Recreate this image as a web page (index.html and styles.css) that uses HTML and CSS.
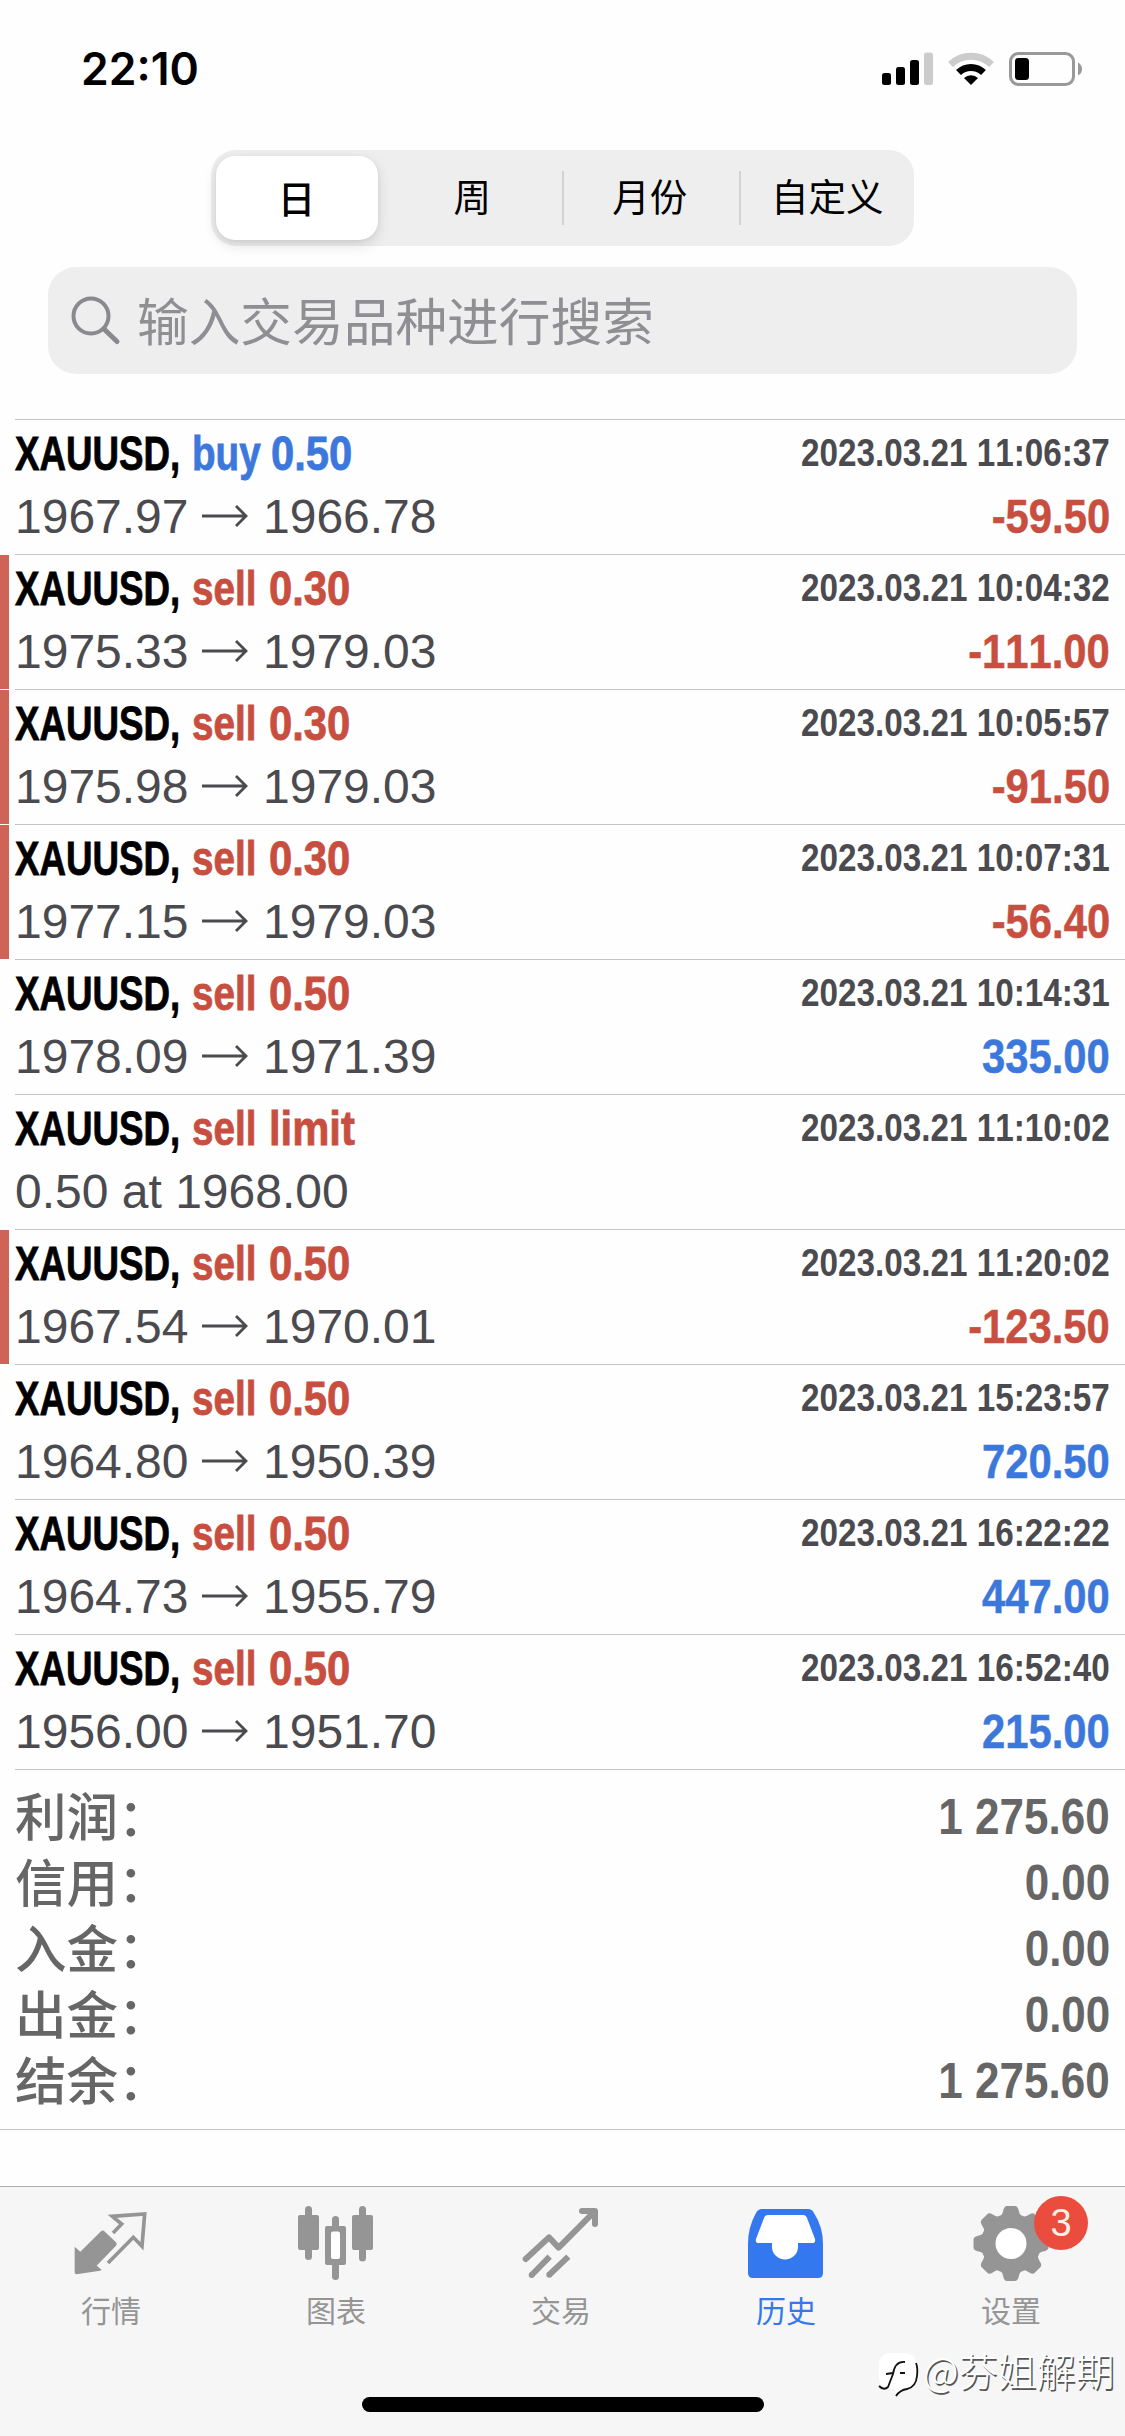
FILE: index.html
```html
<!DOCTYPE html>
<html lang="zh-CN">
<head>
<meta charset="utf-8">
<title>历史</title>
<link rel="stylesheet" href="styles.css">
</head>
<body>
<svg class="defs" width="0" height="0">
  <symbol id="arrow" viewBox="0 0 46 24"><path d="M0 12H44M34 2l10 10-10 10" fill="none" stroke="currentColor" stroke-width="2.8"/></symbol>
</svg>
<header class="status">
  <span class="clock">22:10</span>
  <svg class="status-icons" width="204" height="40" viewBox="880 49 204 40">
    <rect x="882" y="73" width="9" height="12" rx="2.5"/>
    <rect x="896" y="67" width="9" height="18" rx="2.5"/>
    <rect x="910" y="60" width="9" height="25" rx="2.5"/>
    <rect x="924" y="52.500" width="9" height="32.500" rx="2.500" fill="#ccc"/>
    <path d="M950.500 64.500a29.500 29.500 0 0 1 41 0" fill="none" stroke="#ccc" stroke-width="7"/>
    <path d="M958.500 72.500a18 18 0 0 1 25 0" fill="none" stroke="#000" stroke-width="7"/>
    <path d="M971 85l-7-7a10.500 10.500 0 0 1 14 0z"/>
    <rect x="1010.500" y="53.500" width="63" height="31" rx="8" fill="none" stroke="#999" stroke-width="3"/>
    <rect x="1015" y="58" width="14" height="22" rx="3.500"/>
    <path d="M1078 62.500q4 2 4 6.500t-4 6.500z" fill="#999"/>
  </svg>
</header>

<div class="segments">
  <span class="segment active">日</span>
  <span class="segment">周</span>
  <span class="segment divided">月份</span>
  <span class="segment divided">自定义</span>
</div>

<div class="search">
  <svg width="50" height="50" viewBox="0 0 50 50" fill="none" stroke="#8a8a8e" stroke-linecap="round"><circle cx="20" cy="20" r="17.500" stroke-width="4"/><path d="M33 33l13 12.500" stroke-width="5"/></svg>
  <span>输入交易品种进行搜索</span>
</div>

<main class="deals">
  <div class="deal"><div class="body">
    <div class="line"><b class="sym">XAUUSD,</b><b class="side buy">buy</b><b class="vol buy">0.50</b><b class="time">2023.03.21 11:06:37</b></div>
    <div class="line"><span class="open">1967.97</span><svg class="arrow"><use href="#arrow"/></svg><span>1966.78</span><b class="profit loss">-59.50</b></div>
  </div></div>
  <div class="deal stopped"><div class="body">
    <div class="line"><b class="sym">XAUUSD,</b><b class="side sell">sell</b><b class="vol sell">0.30</b><b class="time">2023.03.21 10:04:32</b></div>
    <div class="line"><span class="open">1975.33</span><svg class="arrow"><use href="#arrow"/></svg><span>1979.03</span><b class="profit loss">-111.00</b></div>
  </div></div>
  <div class="deal stopped"><div class="body">
    <div class="line"><b class="sym">XAUUSD,</b><b class="side sell">sell</b><b class="vol sell">0.30</b><b class="time">2023.03.21 10:05:57</b></div>
    <div class="line"><span class="open">1975.98</span><svg class="arrow"><use href="#arrow"/></svg><span>1979.03</span><b class="profit loss">-91.50</b></div>
  </div></div>
  <div class="deal stopped"><div class="body">
    <div class="line"><b class="sym">XAUUSD,</b><b class="side sell">sell</b><b class="vol sell">0.30</b><b class="time">2023.03.21 10:07:31</b></div>
    <div class="line"><span class="open">1977.15</span><svg class="arrow"><use href="#arrow"/></svg><span>1979.03</span><b class="profit loss">-56.40</b></div>
  </div></div>
  <div class="deal"><div class="body">
    <div class="line"><b class="sym">XAUUSD,</b><b class="side sell">sell</b><b class="vol sell">0.50</b><b class="time">2023.03.21 10:14:31</b></div>
    <div class="line"><span class="open">1978.09</span><svg class="arrow"><use href="#arrow"/></svg><span>1971.39</span><b class="profit gain">335.00</b></div>
  </div></div>
  <div class="deal"><div class="body">
    <div class="line"><b class="sym">XAUUSD,</b><b class="side sell">sell</b><b class="vol sell">limit</b><b class="time">2023.03.21 11:10:02</b></div>
    <div class="line"><span>0.50 at 1968.00</span></div>
  </div></div>
  <div class="deal stopped"><div class="body">
    <div class="line"><b class="sym">XAUUSD,</b><b class="side sell">sell</b><b class="vol sell">0.50</b><b class="time">2023.03.21 11:20:02</b></div>
    <div class="line"><span class="open">1967.54</span><svg class="arrow"><use href="#arrow"/></svg><span>1970.01</span><b class="profit loss">-123.50</b></div>
  </div></div>
  <div class="deal"><div class="body">
    <div class="line"><b class="sym">XAUUSD,</b><b class="side sell">sell</b><b class="vol sell">0.50</b><b class="time">2023.03.21 15:23:57</b></div>
    <div class="line"><span class="open">1964.80</span><svg class="arrow"><use href="#arrow"/></svg><span>1950.39</span><b class="profit gain">720.50</b></div>
  </div></div>
  <div class="deal"><div class="body">
    <div class="line"><b class="sym">XAUUSD,</b><b class="side sell">sell</b><b class="vol sell">0.50</b><b class="time">2023.03.21 16:22:22</b></div>
    <div class="line"><span class="open">1964.73</span><svg class="arrow"><use href="#arrow"/></svg><span>1955.79</span><b class="profit gain">447.00</b></div>
  </div></div>
  <div class="deal"><div class="body">
    <div class="line"><b class="sym">XAUUSD,</b><b class="side sell">sell</b><b class="vol sell">0.50</b><b class="time">2023.03.21 16:52:40</b></div>
    <div class="line"><span class="open">1956.00</span><svg class="arrow"><use href="#arrow"/></svg><span>1951.70</span><b class="profit gain">215.00</b></div>
  </div></div>
</main>

<section class="summary">
  <div class="total"><span>利润：</span><b>1 275.60</b></div>
  <div class="total"><span>信用：</span><b>0.00</b></div>
  <div class="total"><span>入金：</span><b>0.00</b></div>
  <div class="total"><span>出金：</span><b>0.00</b></div>
  <div class="total"><span>结余：</span><b>1 275.60</b></div>
</section>

<nav class="tabs">
  <a class="tab">
    <svg viewBox="52 2190 120 100"><g transform="translate(60 2190) scale(.3333)"><path d="M47 170l17 15 62-61q5-5 10 0l35 33q5 5 0 10l-58 60 12 10q5 4-2 5l-70 11q-6 0-6-6z"/><path d="M162 129l26-27-28-23 97-7-8 97-26-27-76 77" fill="none" stroke="currentColor" stroke-width="11"/></g></svg>
    <span>行情</span>
  </a>
  <a class="tab">
    <svg viewBox="277 2190 120 100"><rect x="299" y="2215" width="21" height="35" rx="2"/><rect x="306" y="2206" width="7" height="54" rx="3.500"/><rect x="353" y="2215" width="21" height="35" rx="2"/><rect x="360" y="2206" width="7" height="55.500" rx="3.500"/><rect x="333" y="2216" width="7" height="64" rx="3.500"/><rect x="326" y="2226" width="21" height="39" rx="2"/><rect x="332" y="2231.500" width="9" height="27.500" rx="2" fill="#fff"/></svg>
    <span>图表</span>
  </a>
  <a class="tab">
    <svg viewBox="502 2190 120 100"><g transform="translate(500 2190) scale(.3333)" fill="none" stroke="currentColor" stroke-width="18" stroke-linejoin="round"><path d="M80 207l70-65 29 31L287 64M249 63h39v39" stroke-linecap="round"/><path d="M98 255l54-55M150 255l58-55"/></g><g transform="translate(500 2190) scale(.3333)"><circle cx="98" cy="255" r="9"/><circle cx="151" cy="254" r="9"/></g></svg>
    <span>交易</span>
  </a>
  <a class="tab current">
    <svg viewBox="727 2190 120 100"><path d="M763 2209h46q4 0 6 4 9 14 9 31v29q0 5-5 5h-65q-5 0-5-5v-29q0-17 8-31 2-4 6-4z"/><path d="M769 2215h35q3 0 4 3l8 21q1 4-3 4h-14v4a13 12.500 0 0 1-26 0v-4h-13q-4 0-3-4l8-21q1-3 4-3z" fill="#fff"/></svg>
    <span>历史</span>
  </a>
  <a class="tab">
    <svg viewBox="952 2190 120 100"><circle cx="1012" cy="2243.500" r="30"/>
      <g transform="translate(1012 2243.500)"><path id="tooth" d="M-14-26q5-1 6-6 1-5.500 4-5.500h8q3 0 4 5.500 1 5 6 6z"/><use href="#tooth" transform="rotate(45)"/><use href="#tooth" transform="rotate(90)"/><use href="#tooth" transform="rotate(135)"/><use href="#tooth" transform="rotate(180)"/><use href="#tooth" transform="rotate(225)"/><use href="#tooth" transform="rotate(270)"/><use href="#tooth" transform="rotate(315)"/></g>
      <circle cx="1012" cy="2243.500" r="15.500" fill="#fff"/></svg>
    <span>设置</span>
    <i class="badge">3</i>
  </a>
</nav>
<div class="home"><div class="home-bar"></div></div>
<div class="watermark">
  <svg width="44" height="50" viewBox="0 0 44 50"><path d="M14 3h13q12 0 12 12v11q0 11-10 13-7 1-10 7l-1-7h-3Q2 39 2 27V15Q2 3 14 3z" fill="#fff"/><path d="M39 13q2 5 1 13-1 11-10 13-7 1-11 7M2 36q5 5 9 1l5-13q2-13 12-12M9 24l7-1M23 23h5" fill="none" stroke="#111" stroke-width="1.800"/></svg>
  <span>@芬姐解期</span>
</div>
</body>
</html>
```
FILE: styles.css
```css
* { box-sizing: border-box; }
body {
  position: relative;
  display: flex;
  flex-direction: column;
  width: 1125px;
  height: 2436px;
  margin: 0;
  overflow: hidden;
  background: #fefefe;
  color: #000;
  font-family: "Liberation Sans", "Noto Sans CJK SC", sans-serif;
  font-kerning: none;
}
.defs { position: absolute; }

.status {
  display: flex;
  align-items: center;
  justify-content: space-between;
  height: 150px;
  padding: 0 41px 12px 81px;
}
.clock { font: 600 44.5px/60px Inter, sans-serif; }

.segments {
  display: grid;
  grid-template-columns: repeat(4, 177.5px);
  justify-content: center;
  align-items: center;
  width: 703px;
  height: 96px;
  margin: 0 auto;
  border-radius: 25px;
  background: #eee;
}
.segment {
  margin-left: -1px;
  margin-right: 1px;
  padding-right: 3px;
  font: 400 37.5px/54px "Liberation Sans", "Noto Sans CJK SC", sans-serif;
  text-align: center;
  border-left: 2px solid transparent;
}
.segment.divided { border-left-color: #d2d2d3; }
.segment.active {
  width: 162px;
  margin-left: 8px;
  padding-right: 2px;
  font-family: "Noto Sans CJK SC", sans-serif;
  font-weight: 500;
  line-height: 82px;
  padding-bottom: 2px;
  border-radius: 19px;
  background: #fff;
  box-shadow: 0 5px 14px rgba(0, 0, 0, .12), 0 1px 4px rgba(0, 0, 0, .06);
}

.search {
  display: flex;
  align-items: center;
  gap: 16px;
  width: 1029px;
  height: 107px;
  margin: 21px 48px 45px;
  padding-left: 23px;
  border-radius: 28px;
  background: #eeeeef;
  color: #8e8e93;
  font: 400 51.700px/60px "Noto Sans CJK SC", sans-serif;
}
.search span { padding-bottom: 4px; }

.deal { height: 135px; padding-left: 15px; }
.stopped {
  background: linear-gradient(#cf6356, #cf6356) 0 1px / 9px 134px no-repeat;
}
.body {
  height: 135px;
  padding: 2px 15px 0 0;
  border-top: 1px solid #c4c4c6;
}
.line {
  display: flex;
  height: 63px;
  color: #4a4a4f;
  font-size: 48px;
  line-height: 63px;
  white-space: nowrap;
}
.sym, .side, .vol { transform-origin: 0 50%; -webkit-text-stroke: .8px currentColor; }
.sym { width: 177px; color: #000; transform: scaleX(.765); }
.side { width: 77px; transform: scaleX(.805); }
.side.buy { width: 79px; }
.vol { transform: scaleX(.87); }
.buy, .gain { color: #3c78dc; }
.sell, .loss { color: #c84e3f; }
.time {
  margin-left: auto;
  font-size: 38px;
  line-height: 62px;
  transform: scaleX(.875);
  transform-origin: 100% 50%;
}
.open { width: 187px; }
.arrow { width: 46px; height: 24px; margin: 19px 15px 0 0; }
.profit {
  margin-left: auto;
  transform: scaleX(.87);
  transform-origin: 100% 50%;
  -webkit-text-stroke: .5px currentColor;
}

.summary {
  height: 361px;
  padding: 15px 0 0;
  border-bottom: 1px solid #c4c4c6;
  background: linear-gradient(#c4c4c6, #c4c4c6) 15px 0 / 1110px 1px no-repeat;
}
.total {
  display: flex;
  justify-content: space-between;
  height: 66px;
  padding: 0 15px;
  color: #666;
  font: 500 51.500px/66px "Liberation Sans", "Noto Sans CJK SC", sans-serif;
}
.total span { padding-top: 1px; }
.total b {
  font-size: 50px;
  font-weight: 700;
  transform: scaleX(.88);
  transform-origin: 100% 50%;
}

.tabs {
  display: flex;
  height: 150px;
  margin-top: 56px;
  border-top: 1px solid #adadad;
  background: #f6f6f6;
}
.tab {
  position: relative;
  display: flex;
  flex: 1;
  flex-direction: column;
  align-items: center;
  padding: 3px 3px 0 0;
  color: #959595;
  fill: currentColor;
  font: 400 30px/39px "Noto Sans CJK SC", sans-serif;
}
.tab svg { width: 120px; height: 100px; }
.current { color: #3478f0; }
.badge {
  position: absolute;
  left: 134px;
  top: 9px;
  width: 54px;
  height: 54px;
  border-radius: 50%;
  background: #ea4d3d;
  color: #fff0e6;
  font: 400 38px/54px "Liberation Sans", sans-serif;
  text-align: center;
}
.home { flex: 1; padding-top: 61px; background: #f6f6f6; }
.home-bar { width: 402px; height: 15px; margin: 0 auto; border-radius: 8px; background: #000; }

.watermark {
  position: absolute;
  left: 877px;
  top: 2350px;
  display: flex;
  align-items: flex-start;
  gap: 2px;
  color: #fff;
  font: 300 39px/38px "Noto Sans CJK SC", sans-serif;
  text-shadow: 1.500px 1.500px 0 #555;
  white-space: nowrap;
}
```
